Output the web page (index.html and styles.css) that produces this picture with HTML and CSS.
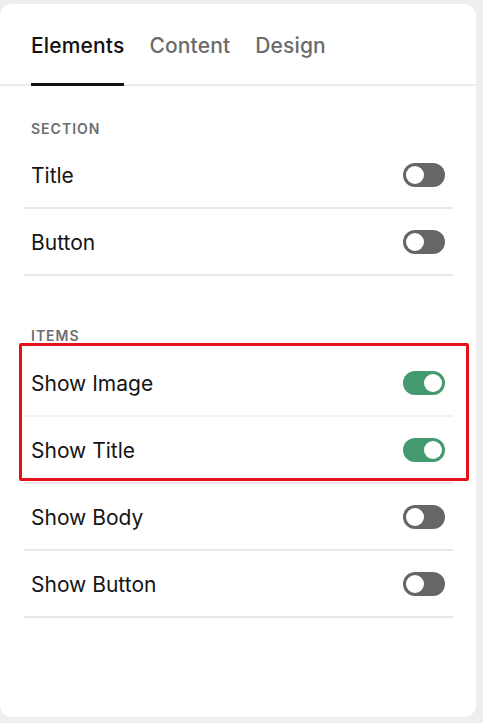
FILE: index.html
```html
<!DOCTYPE html>
<html>
<head>
<meta charset="utf-8">
<link rel="stylesheet" href="styles.css">
</head>
<body>
<div class="card">
  <nav class="tabs">
    <span class="tab active">Elements</span>
    <span class="tab">Content</span>
    <span class="tab">Design</span>
  </nav>
  <div class="body">
    <div class="label section-label">SECTION</div>
    <div class="row"><span>Title</span><span class="toggle"></span></div>
    <div class="row"><span>Button</span><span class="toggle"></span></div>
    <div class="label items-label">ITEMS</div>
    <div class="group">
      <div class="row light"><span>Show Image</span><span class="toggle on"></span></div>
      <div class="row"><span>Show Title</span><span class="toggle on"></span></div>
      <div class="highlight"></div>
    </div>
    <div class="row"><span>Show Body</span><span class="toggle"></span></div>
    <div class="row"><span>Show Button</span><span class="toggle"></span></div>
  </div>
</div>
</body>
</html>
```
FILE: styles.css
```css
html, body { margin: 0; padding: 0; }
body {
  background: #eeeeee;
  font-family: Inter, "Liberation Sans", Arial, sans-serif;
  color: #1a1a1a;
  width: 483px;
  height: 723px;
  overflow: hidden;
}
.card {
  margin-top: 4px;
  width: 476px;
  height: 713px;
  background: #fff;
  border-radius: 12px;
  box-sizing: border-box;
}
.tabs {
  display: flex;
  gap: 25px;
  padding: 0 0 0 31px;
  height: 82px;
  border-bottom: 2px solid #ebebeb;
  box-sizing: border-box;
  align-items: stretch;
}
.tab {
  font-size: 21px;
  font-weight: 500;
  color: #6b6b6b;
  padding-top: 29px;
  box-sizing: border-box;
  letter-spacing: 0.15px;
}
.tab.active {
  color: #111;
  border-bottom: 3px solid #111;
  margin-bottom: -2px;
}
.body {
  padding: 0 23px 0 24px;
}
.label {
  font-size: 14px;
  font-weight: 600;
  color: #6e6e6e;
  letter-spacing: 1px;
  padding-left: 7px;
}
.section-label { padding-top: 34px; height: 22px; line-height: 18px; }
.items-label { margin-top: 51px; height: 23px; line-height: 18px; }
.row {
  height: 67px;
  box-sizing: border-box;
  border-bottom: 2px solid #e8e8e8;
  display: flex;
  align-items: center;
  justify-content: space-between;
  padding: 0 8px 0 7px;
  font-size: 21px;
  font-weight: 400;
  color: #151515;
}
.row > span:first-child { margin-top: 2px; }
.row.light { border-bottom-color: #f2f2f2; }
.group { position: relative; }
.highlight {
  position: absolute;
  left: -5px;
  right: -16px;
  top: -7px;
  bottom: 3px;
  border: 3px solid #e3121b;
  border-radius: 2px;
  pointer-events: none;
}
.toggle {
  width: 42px;
  height: 24px;
  border-radius: 12px;
  background: #666;
  position: relative;
  flex: none;
}
.toggle::after {
  content: "";
  position: absolute;
  top: 3px;
  left: 3px;
  width: 18px;
  height: 18px;
  border-radius: 50%;
  background: #fff;
}
.toggle.on { background: #449a6f; }
.toggle.on::after { left: 21px; }
```
